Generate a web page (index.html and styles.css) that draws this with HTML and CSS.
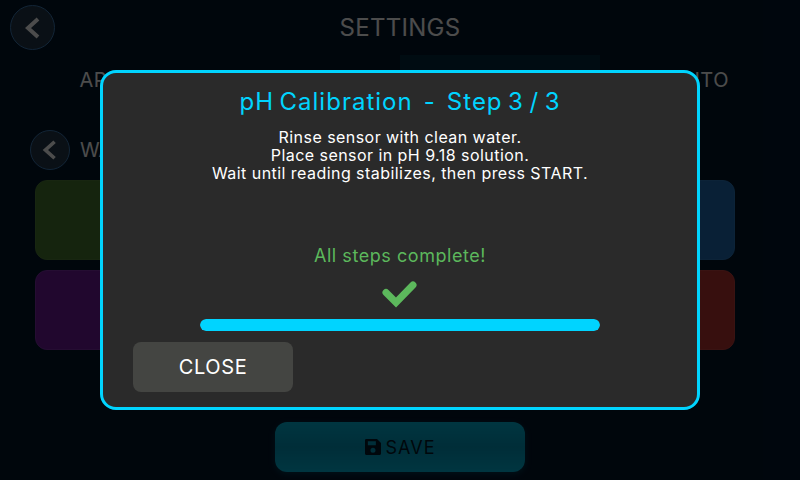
FILE: index.html
```html
<!DOCTYPE html>
<html lang="en">
<head>
<meta charset="UTF-8">
<meta name="viewport" content="width=device-width, initial-scale=1.0">
<title>Settings</title>
<link rel="stylesheet" href="styles.css">
</head>
<body>

<div class="screen">
    <header class="topbar">
        <button class="back back-lg">
            <svg viewBox="0 0 24 24" width="24" height="24"><polyline points="17,3 7,12 17,21"/></svg>
        </button>
        <h1>SETTINGS</h1>
    </header>

    <nav class="tabs">
        <div class="tab">APP</div>
        <div class="tab">WIFI</div>
        <div class="tab active">PH</div>
        <div class="tab">AUTO</div>
    </nav>

    <div class="subhead">
        <button class="back">
            <svg viewBox="0 0 24 24" width="22" height="22"><polyline points="17,3 7,12 17,21"/></svg>
        </button>
        <span>WATER</span>
    </div>

    <div class="cards">
        <div class="card green"></div>
        <div class="card blue"></div>
        <div class="card purple"></div>
        <div class="card red"></div>
    </div>

    <button class="save">
        <svg viewBox="1 1 14 14" width="16" height="16"><path d="M2 1h9.5L15 4.5V14a1 1 0 0 1-1 1H2a1 1 0 0 1-1-1V2a1 1 0 0 1 1-1zm1.5 2v3.5h7V3zM8 8.6a2.2 2.2 0 1 0 0 4.4 2.2 2.2 0 0 0 0-4.4z" fill-rule="evenodd"/></svg>
        SAVE
    </button>
</div>

<div class="overlay">
    <div class="modal">
        <h2>pH Calibration&nbsp; -&nbsp; Step 3 / 3</h2>
        <p class="steps">Rinse sensor with clean water.<br>Place sensor in pH 9.18 solution.<br>Wait until reading stabilizes, then press START.</p>
        <div class="status">All steps complete!</div>
        <svg class="check" viewBox="0 0 40 30" width="40" height="30"><polyline points="6,12.5 16,22.5 33,5"/></svg>
        <div class="progress"><div class="progress-fill" style="width:100%"></div></div>
        <button class="btn-close">CLOSE</button>
    </div>
</div>

</body>
</html>
```

FILE: styles.css
```css
* { margin: 0; padding: 0; box-sizing: border-box; font-family: Inter, "Open Sans", sans-serif; }
body { width: 800px; height: 480px; overflow: hidden; background: #00142a; color: white; }
button { border: none; background: none; }

.screen { width: 800px; height: 480px; display: flex; flex-direction: column; }

.topbar { height: 55px; padding: 5px 10px 0; display: flex; }
.topbar h1 { flex: 1; padding-right: 45px; text-align: center; font-size: 24px; font-weight: 400; line-height: 46px; letter-spacing: 0.3px; }

.back { width: 40px; height: 40px; border-radius: 50%; border: 1px solid #3d7ab5; background: #22384a; display: flex; align-items: center; justify-content: center; }
.back-lg { width: 45px; height: 45px; }
.back polyline { fill: none; stroke: #fff; stroke-width: 4; }

.tabs { display: flex; height: 75px; }
.tab { width: 200px; text-align: center; font-size: 20px; line-height: 50px; letter-spacing: 0.5px; }
.tab.active { background: #002a3d; }

.subhead { display: flex; align-items: center; gap: 10px; height: 40px; padding-left: 30px; font-size: 20px; margin-bottom: 10px; }

.cards { display: grid; grid-template-columns: 1fr 1fr; grid-auto-rows: 80px; gap: 10px; padding: 0 65px 0 35px; }
.card { border-radius: 12px; border: 1px solid; }
.green { background: #46782f; border-color: #507f3a; }
.blue { background: #1f6cb4; border-color: #2a76bb; }
.purple { background: #6e1a9c; border-color: #7c2da8; }
.red { background: #b9322f; border-color: #c0403c; }

.save { width: 250px; height: 50px; margin: 72px auto 0; border-radius: 12px; background: linear-gradient(#00b4d8, #0098bc, #00b4d8); color: #001a2a; font-size: 18px; letter-spacing: 1px; display: flex; align-items: center; justify-content: center; gap: 5px; box-shadow: 0 2px 6px rgba(0,180,212,0.25); }
.save path { fill: #001a2a; }

.overlay { position: absolute; top: 0; left: 0; width: 800px; height: 480px; background: rgba(0,0,0,0.7); }

.modal { position: absolute; top: 70px; left: 100px; width: 600px; height: 340px; background: #2a2a2a; border: 3px solid #00d4ff; border-radius: 16px; display: flex; flex-direction: column; align-items: center; }
.modal h2 { margin-top: 13px; font-size: 24px; font-weight: 400; line-height: 32px; letter-spacing: 1px; word-spacing: -2.2px; color: #00d4ff; }
.steps { margin-top: 10px; font-size: 16px; line-height: 18px; letter-spacing: 0.45px; text-align: center; }
.status { margin-top: 63px; font-size: 18px; line-height: 22px; letter-spacing: 0.55px; color: #5cb85c; }
.check { margin-top: 13px; }
.check polyline { fill: none; stroke: #5cb85c; stroke-width: 7; stroke-linecap: round; }
.progress { width: 400px; height: 12px; margin-top: 9px; border-radius: 6px; background: #444; overflow: hidden; }
.progress-fill { height: 100%; background: #00d4ff; border-radius: 6px; }
.btn-close { align-self: flex-start; width: 160px; height: 50px; margin: 11px 0 0 30px; border-radius: 8px; background: #444542; color: white; font-size: 20px; letter-spacing: 0.6px; }
```
